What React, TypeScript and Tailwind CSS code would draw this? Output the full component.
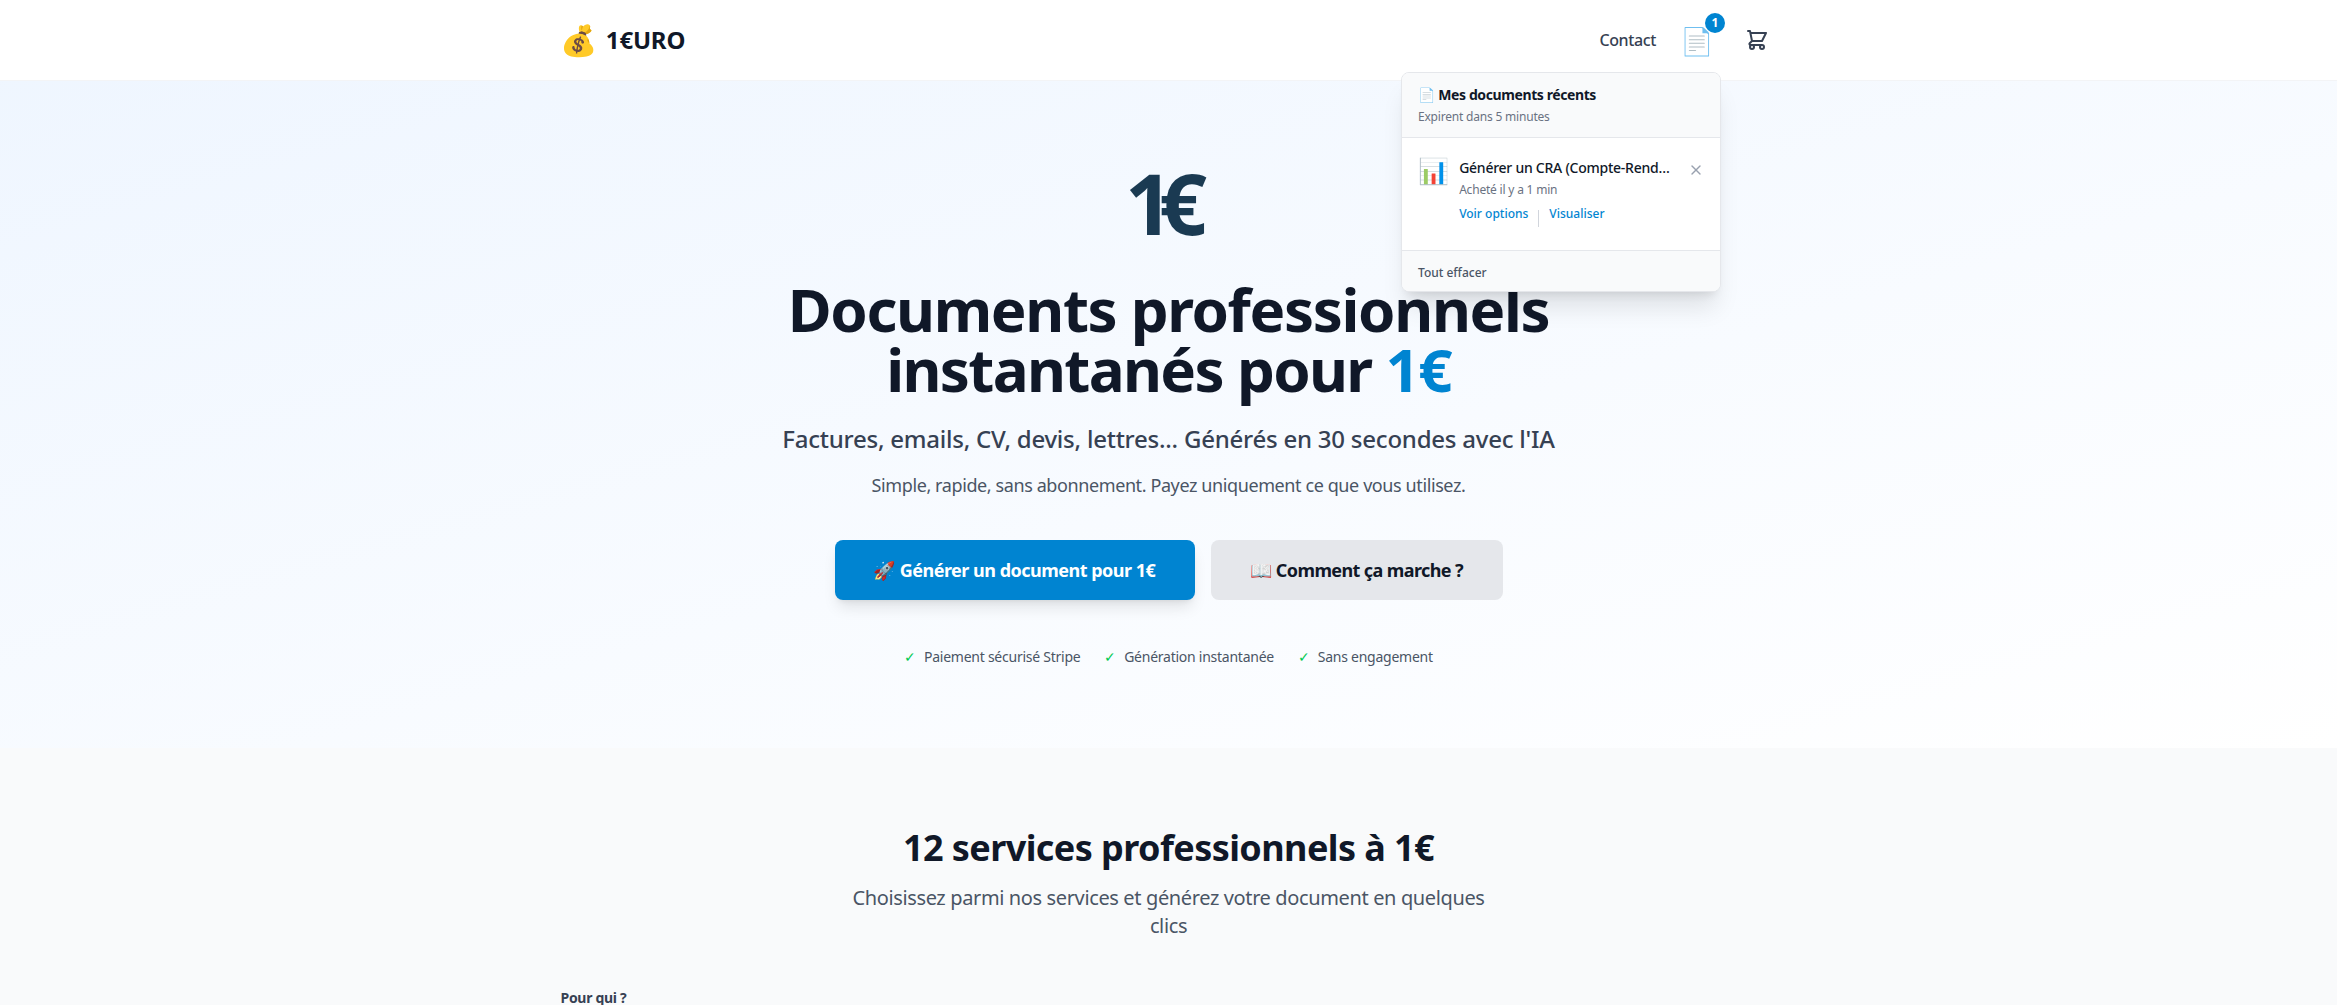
import { X } from "lucide-react";

const font = { fontFamily: '"Noto Sans", "Noto Color Emoji", sans-serif' };

function Header() {
  return (
    <header className="relative z-10 h-[81px] border-b border-gray-100 bg-white">
      <div className="mx-auto flex h-20 max-w-7xl items-center justify-between px-8">
        <div className="flex items-center gap-2">
          <span className="text-[30px] leading-none">💰</span>
          <span className="text-2xl font-bold tracking-[-0.2px] text-gray-900">1€URO</span>
        </div>
        <div className="flex items-center">
          <span className="mr-6 font-medium tracking-[-0.4px] text-gray-700">Contact</span>
          <div className="relative mr-[31px] text-[27px] leading-none">
            📄
            <span className="absolute -top-[14px] left-[25px] flex h-5 w-5 items-center justify-center rounded-full bg-sky-600 text-xs font-bold text-white">
              1
            </span>
          </div>
          <svg className="mr-2 h-6 w-6 text-gray-700" fill="none" viewBox="0 0 24 24" stroke="currentColor" strokeWidth={2} strokeLinecap="round" strokeLinejoin="round">
            <path d="M3 3h2l.4 2M7 13h10l4-8H5.4M7 13L5.4 5M7 13l-2.293 2.293c-.63.63-.184 1.707.707 1.707H17m0 0a2 2 0 100 4 2 2 0 000-4zm-8 2a2 2 0 11-4 0 2 2 0 014 0z" />
          </svg>
        </div>
      </div>
    </header>
  );
}

function RecentDocs() {
  return (
    <div className="absolute top-[72px] left-[1401px] z-20 w-80 overflow-hidden rounded-lg border border-gray-200 bg-white shadow-xl">
      <div className="h-[65px] border-b border-gray-200 bg-gray-50 px-4 pt-3">
        <p className="text-sm leading-5 font-bold tracking-[-0.4px] text-gray-900">📄 Mes documents récents</p>
        <p className="mt-1 text-xs tracking-[-0.2px] text-gray-500">Expirent dans 5 minutes</p>
      </div>
      <div className="flex h-[113px] gap-[10px] border-b border-gray-200 px-4 pt-5">
        <span className="text-[25px] leading-none">📊</span>
        <div className="min-w-0 flex-1">
          <p className="truncate text-sm font-medium tracking-[-0.25px] text-gray-900">Générer un CRA (Compte-Rendu d'Activité)</p>
          <p className="mt-1 text-xs tracking-[-0.2px] text-gray-500">Acheté il y a 1 min</p>
          <div className="mt-2 flex gap-[10px] text-xs font-medium text-sky-600">
            <span>Voir options</span>
            <span className="mt-1 h-[17px] w-px bg-gray-300"></span>
            <span>Visualiser</span>
          </div>
        </div>
        <X className="mt-1 ml-[2px] h-4 w-4 text-gray-400" />
      </div>
      <div className="flex h-[40px] items-center bg-gray-50 px-4 pt-1 text-xs font-medium text-gray-600">Tout effacer</div>
    </div>
  );
}

function Hero() {
  return (
    <section className="flex h-[667px] flex-col items-center bg-gradient-to-br from-blue-50 to-white pt-20 text-center">
      <div className="mr-[19px] text-[84px] leading-none font-bold tracking-[-14px] text-[#1a3a52]">1€</div>
      <h1 className="mt-[34px] text-6xl leading-none font-bold tracking-[-1.35px] text-gray-900">
        Documents professionnels
        <br />
        <span className="tracking-[-1.65px]">
          instantanés pour <span className="text-sky-600">1€</span>
        </span>
      </h1>
      <p className="mt-6 text-2xl font-medium tracking-[-0.23px] text-gray-700">Factures, emails, CV, devis, lettres... Générés en 30 secondes avec l'IA</p>
      <p className="mt-4 text-lg tracking-[-0.4px] text-gray-600">Simple, rapide, sans abonnement. Payez uniquement ce que vous utilisez.</p>
      <div className="mt-[41px] flex gap-4">
        <button className="h-[60px] w-[360px] rounded-lg bg-sky-600 text-lg font-bold tracking-[-0.5px] text-white shadow-lg">🚀 Générer un document pour 1€</button>
        <button className="h-[60px] w-[292px] rounded-lg bg-gray-200 text-lg font-bold tracking-[-0.6px] text-gray-900">📖 Comment ça marche ?</button>
      </div>
      <div className="mt-[47px] flex gap-6 text-sm tracking-[-0.25px] text-gray-600">
        <span><span className="mr-2 text-green-500">✓</span>Paiement sécurisé Stripe</span>
        <span><span className="mr-2 text-green-500">✓</span>Génération instantanée</span>
        <span><span className="mr-2 text-green-500">✓</span>Sans engagement</span>
      </div>
    </section>
  );
}

function Services() {
  return (
    <section className="bg-gray-50 pt-20">
      <div className="mx-auto max-w-7xl px-8">
        <div className="text-center">
          <h2 className="text-4xl font-bold tracking-[-0.58px] text-gray-900">12 services professionnels à 1€</h2>
          <p className="mx-auto mt-4 max-w-2xl text-xl tracking-[-0.37px] text-gray-600">Choisissez parmi nos services et générez votre document en quelques clics</p>
        </div>
        <h3 className="mt-12 text-sm font-bold tracking-[-0.3px] text-gray-700">Pour qui ?</h3>
      </div>
    </section>
  );
}

export default function App() {
  return (
    <div className="relative h-[1005px] overflow-hidden bg-white" style={font}>
      <Header />
      <RecentDocs />
      <Hero />
      <Services />
    </div>
  );
}
